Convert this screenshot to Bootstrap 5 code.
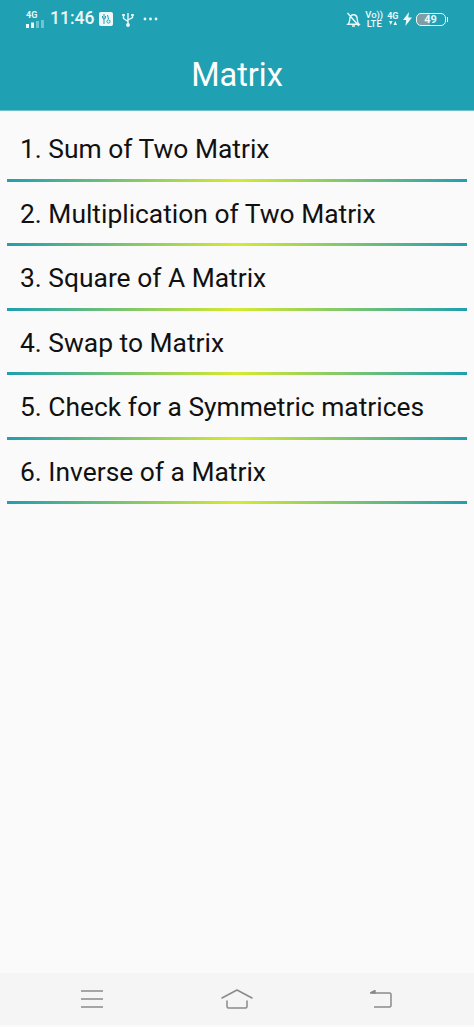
<!DOCTYPE html>
<html lang="en">
<head>
<meta charset="utf-8">
<title>Matrix</title>
<link href="https://cdn.jsdelivr.net/npm/bootstrap@5.3.0/dist/css/bootstrap.min.css" rel="stylesheet">
<style>
html,body{height:100%;}
body{background:#fafafa;font-family:Roboto,"Liberation Sans",sans-serif;color:#111;overflow:hidden;}
.phone{height:1027px;}
.app-head{background:#1fa1b3;height:111px;color:#fff;border-bottom:1px solid #6fbfcb;}
.stat-row{height:38px;padding:0 26px 0 26px;color:#eef8fa;}
.stat-time{font-size:17.5px;font-weight:500;line-height:1;margin:0 5px 0 5px;}
.net-tag{font-size:9px;font-weight:700;line-height:1;}
.net-col{line-height:1;}
.lte-tag{font-size:9.5px;font-weight:500;line-height:.95;text-align:center;}
.batt-box{width:30px;height:13px;border:1.2px solid #eef8fa;border-radius:5px;font-size:11px;font-weight:700;line-height:11px;text-align:center;background:linear-gradient(90deg,#7e9ea6 0 48%,transparent 48%);}
.batt-tip{width:1.5px;height:5px;background:#eef8fa;margin-left:1px;}
.usb-tile{width:14px;height:14px;background:#eef8fa;border-radius:2px;}
.app-name{font-size:32.5px;line-height:1;height:72px;padding-top:21px;font-weight:400;}
.item-list{padding:6px 7px 0;}
.item-row{height:64.5px;display:flex;flex-direction:column;justify-content:flex-end;}
.item-label{font-size:26.4px;line-height:1;padding:0 13px 16px;color:#111;}
.item-rule{height:3px;background:linear-gradient(90deg,#1f9fb0 0%,#d6ea30 50%,#1f9fb0 100%);}
.bottom-bar{height:52px;background:#f5f5f5;margin-bottom:2px;padding:0 82px 0 81px;}
</style>
</head>
<body>
<div class="phone d-flex flex-column">
  <header class="app-head flex-shrink-0">
    <div class="stat-row d-flex align-items-center justify-content-between">
      <div class="d-flex align-items-center">
        <div class="net-col d-flex flex-column align-items-start">
          <span class="net-tag">4G</span>
          <svg width="19" height="8" viewBox="0 0 19 8"><rect x="0" y="4" width="3" height="4" fill="#eef8fa"/><rect x="5" y="2.500" width="3" height="5.500" fill="#eef8fa"/><rect x="10" y="1" width="3" height="7" fill="#eef8fa" opacity=".4"/><rect x="15" y="0" width="3" height="8" fill="#eef8fa" opacity=".4"/></svg>
        </div>
        <span class="stat-time">11:46</span>
        <span class="usb-tile d-inline-flex align-items-center justify-content-center">
          <svg width="12" height="12" viewBox="0 0 12 12" fill="none" stroke="#1fa1b3" stroke-width="1"><path d="M4 1v10M2.500 3v2l1.500 1M5.500 3v2L4 6.500"/><circle cx="8.500" cy="8.500" r="1.600"/><path d="M7.500 2l1 4"/></svg>
        </span>
        <svg class="ms-2" width="14" height="15" viewBox="0 0 14 15" fill="none" stroke="#eef8fa" stroke-width="1.400"><path d="M7 1v13M2.500 3.500v3L7 9.500M11.500 3.500v2L7 8"/><rect x="1.200" y="2" width="2.600" height="2" fill="#eef8fa" stroke="none"/><rect x="10.200" y="2" width="2.600" height="2" fill="#eef8fa" stroke="none"/><circle cx="7" cy="13" r="1.200" fill="#eef8fa"/></svg>
        <svg class="ms-2" width="15" height="4" viewBox="0 0 15 4" fill="#eef8fa"><circle cx="2" cy="2" r="1.400"/><circle cx="7.500" cy="2" r="1.400"/><circle cx="13" cy="2" r="1.400"/></svg>
      </div>
      <div class="d-flex align-items-center">
        <svg width="15" height="15" viewBox="0 0 15 15" fill="none" stroke="#eef8fa" stroke-width="1.400"><path d="M2 12.200h11c-1.600-1.500-1.800-3-1.800-5.200 0-2.300-1.500-4.200-3.700-4.200S3.800 4.700 3.800 7c0 2.200-.2 3.700-1.800 5.200zM6 14h3M1.500 1l11.500 13"/></svg>
        <div class="lte-tag ms-1">Vo))<br>LTE</div>
        <div class="net-col d-flex flex-column align-items-center ms-1">
          <span class="net-tag">4G</span>
          <svg width="8" height="5" viewBox="0 0 8 5" fill="#eef8fa"><path d="M0 0h3.500L1.750 4zM4.500 4h3.500L6.250 0z"/></svg>
        </div>
        <svg class="ms-1" width="9" height="14" viewBox="0 0 9 14" fill="#eef8fa"><path d="M6 0 0 8h3.200L2.400 14 9 5.500H5.300z"/></svg>
        <div class="batt-box ms-1">49</div>
        <div class="batt-tip"></div>
      </div>
    </div>
    <div class="app-name text-center">Matrix</div>
  </header>
  <main class="item-list flex-grow-1">
    <div class="item-row"><div class="item-label">1. Sum of Two Matrix</div><div class="item-rule"></div></div>
    <div class="item-row"><div class="item-label">2. Multiplication of Two Matrix</div><div class="item-rule"></div></div>
    <div class="item-row"><div class="item-label">3. Square of A Matrix</div><div class="item-rule"></div></div>
    <div class="item-row"><div class="item-label">4. Swap to Matrix</div><div class="item-rule"></div></div>
    <div class="item-row"><div class="item-label">5. Check for a Symmetric matrices</div><div class="item-rule"></div></div>
    <div class="item-row"><div class="item-label">6. Inverse of a Matrix</div><div class="item-rule"></div></div>
  </main>
  <nav class="bottom-bar d-flex align-items-center justify-content-between flex-shrink-0">
    <svg width="22" height="18" viewBox="0 0 22 18" fill="none" stroke="#8a8a8a" stroke-width="1.500"><path d="M0 1h22M0 9h22M0 17h22"/></svg>
    <svg width="32" height="20" viewBox="0 0 32 20" fill="none" stroke="#8a8a8a" stroke-width="1.500" stroke-linecap="round" stroke-linejoin="round"><path d="M1 9 16 1l15 8M6 12v5.500q0 1.500 1.500 1.500h17q1.500 0 1.500-1.500V12"/></svg>
    <svg width="22" height="18" viewBox="0 0 22 18" fill="none" stroke="#8a8a8a" stroke-width="1.500" stroke-linejoin="round"><path d="M2 3h17.500q1.500 0 1.500 1.500v11q0 1.500-1.500 1.500H4"/><path d="M0 3l5-2.500v2.500z" fill="#8a8a8a"/></svg>
  </nav>
</div>
<script src="https://cdn.jsdelivr.net/npm/bootstrap@5.3.0/dist/js/bootstrap.bundle.min.js"></script>
</body>
</html>
